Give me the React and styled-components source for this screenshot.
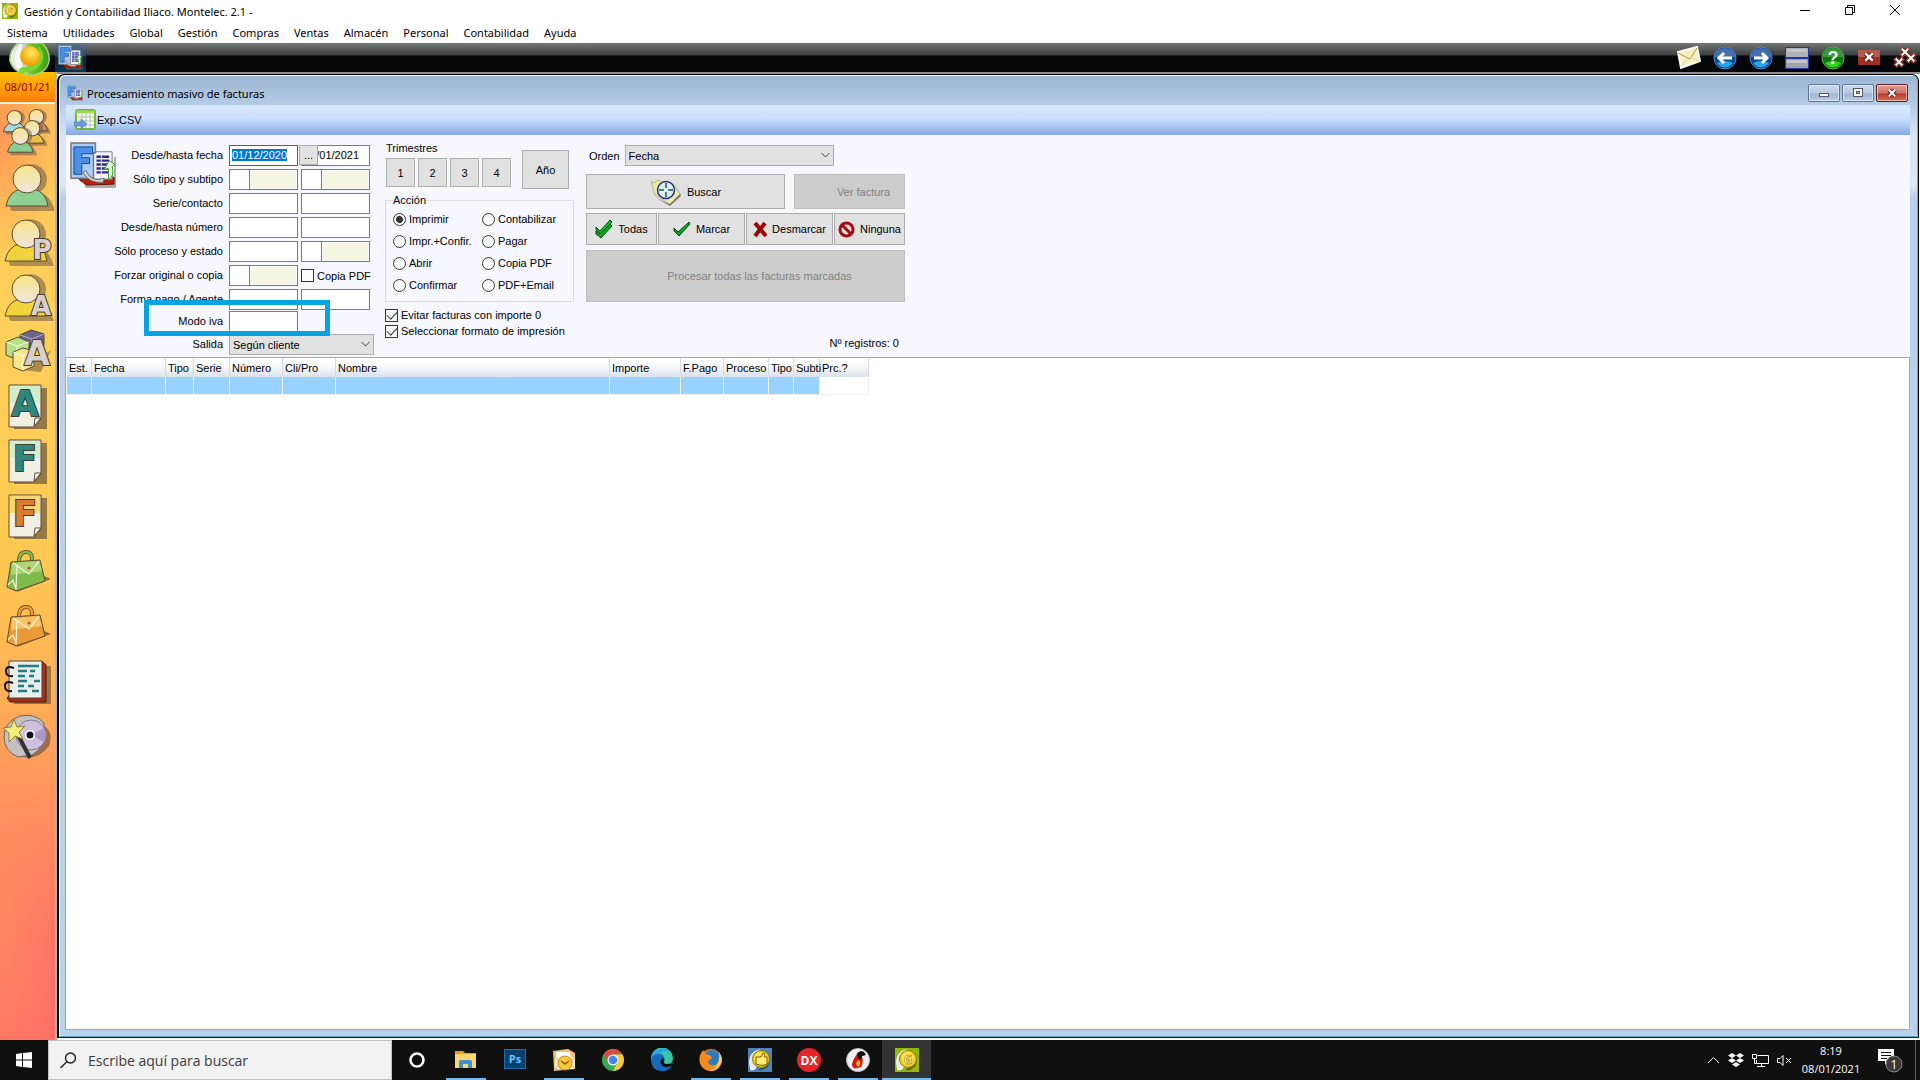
import React, { useEffect, useRef, useState } from "react"
import styled, { createGlobalStyle, css } from "styled-components"

const GlobalStyle = createGlobalStyle`
  * { box-sizing: border-box; }
  body {
    margin: 0;
    background: #fff;
    color: #000;
    font-family: "Liberation Sans", Arial, sans-serif;
    font-size: 11px;
  }
  button, input, select { font: inherit; color: inherit; margin: 0; padding: 0; }
  svg { display: block; flex: none; }
`

const uiFont = `"Noto Sans", "Open Sans", sans-serif`
const taskFont = `"Open Sans", "Noto Sans", sans-serif`

const Screen = styled.div`
  display: flex;
  flex-direction: column;
  min-height: 100vh;
`

const TitleBar = styled.header`
  display: flex;
  align-items: center;
  height: 24px;
  padding: 0 20px 2px 2px;
  font-family: ${uiFont};
  font-size: 11px;
  gap: 6px;
`

const TitleText = styled.span`
  flex: 1;
`

const PlainButton = styled.button`
  display: flex;
  align-items: center;
  justify-content: center;
  background: none;
  border: 0;
`

const SystemButtons = styled.div`
  display: flex;
  gap: 35px;
  margin-top: -2px;
`

const MenuBar = styled.nav`
  display: flex;
  align-items: center;
  gap: 15px;
  height: 19px;
  padding: 0 7px 2px;
  font-family: ${uiFont};
  font-size: 11px;
`

const MenuLink = styled.a`
  color: #000;
  text-decoration: none;
`

const ToolBar = styled.div`
  display: flex;
  align-items: center;
  height: 29px;
  padding-right: 3px;
  background: linear-gradient(#747877 0, #3b3e3e 12px, #05080c 13px, #020407 100%);
`

const LogoSlot = styled.div`
  width: 55px;
  height: 29px;
  padding-left: 8px;
  position: relative;
  z-index: 1;
`

const ActiveTool = styled(PlainButton)`
  width: 31px;
  height: 29px;
  background: linear-gradient(#5d7689 0, #1f4a68 13px, #08263c 14px, #0b3350 100%);
`

const ToolGroup = styled.div`
  display: flex;
  align-items: center;
  gap: 12px;
  margin-left: auto;
`

const Main = styled.main`
  display: flex;
  flex: 1;
`

const SideBar = styled.aside`
  display: flex;
  flex-direction: column;
  width: 55px;
  background:
    radial-gradient(60px 120px at 0 60px, rgba(255, 135, 85, 0.7), transparent),
    radial-gradient(70px 200px at 0 860px, rgba(255, 150, 90, 0.6), transparent),
    linear-gradient(#fec058 0, #ffd05a 25%, #ffc951 50%, #ffb055 64%, #ff8a62 78%, #ff6f69 90%, #ff6c68 100%);
`

const DateBox = styled.div`
  height: 32px;
  border-bottom: 2px solid #fff3dc;
  background: linear-gradient(#ffbe00, #ff9a0a 60%, #fb7a0c);
  color: #8c0a00;
  font-family: ${uiFont};
  font-size: 11px;
  line-height: 30px;
  text-align: center;
`

const SideButton = styled(PlainButton)`
  width: 55px;
  height: 55px;
  padding-right: 1px;
`

const Workspace = styled.div`
  display: flex;
  flex: 1;
  padding: 2px 1px 2px 0;
  border-left: 2px solid #b7b0a6;
  background: linear-gradient(#8d8d8d 0 2px, #fff 2px);
`

const Window = styled.section`
  display: flex;
  flex-direction: column;
  flex: 1;
  border: 1px solid #000;
  border-left-width: 2px;
  border-radius: 7px 7px 0 0;
  box-shadow: inset 1px 1px 0 #e6f3fb, inset -1px -1px 0 #43bac9;
  padding: 0 8px 7px 7px;
  background: linear-gradient(#9ab5d3 0, #b5cce5 30px, #d8e5f2 60px, #dce8f4 110px, #b9d1ea 122px);
`

const WindowTitle = styled.div`
  display: flex;
  align-items: center;
  gap: 4px;
  height: 30px;
  padding: 6px 2px 0 1px;
  font-family: ${uiFont};
  font-size: 11px;
`

const WindowText = styled.span`
  flex: 1;
`

const FrameButton = styled.button`
  display: flex;
  align-items: center;
  justify-content: center;
  width: 32px;
  height: 18px;
  margin-left: -2px;
  border: 1px solid ${(p) => (p.$danger ? "#5f2028" : "#5c7898")};
  border-radius: 2px;
  box-shadow: inset 0 0 0 1px rgba(255, 255, 255, 0.5);
  background: ${(p) =>
    p.$danger
      ? "linear-gradient(#e0a296 0, #cf7264 8px, #b93b2b 9px, #d2705a)"
      : "linear-gradient(#c9d9ea 0, #b7cbe1 8px, #9db6d1 9px, #b9cee5)"};
`

const FrameButtons = styled.div`
  display: flex;
  gap: 4px;
`

const ExportBar = styled.div`
  display: flex;
  align-items: center;
  height: 30px;
  padding-left: 8px;
  background: linear-gradient(#d9e8fd 0, #cbe0ff 45%, #b9d1f8 60%, #85a9e2 100%);
`

const ExportButton = styled(PlainButton)`
  gap: 1px;
`

const Panel = styled.form`
  display: flex;
  height: 222px;
  padding: 7px 0 0 4px;
  background: #f7f7ff;
`

const Fields = styled.div`
  position: relative;
  display: grid;
  grid-template-columns: 110px 70px 74px;
  grid-template-rows: repeat(6, 24px) 22px 23px 21px;
  column-gap: 2px;
  align-items: start;
  margin: 3px 0 0 0;
`

const FieldLabel = styled.label`
  display: flex;
  justify-content: flex-end;
  padding-right: 4px;
  line-height: 21px;
  white-space: nowrap;
`

const box = css`
  height: 21px;
  border: 1px solid #7a7a7a;
  background: #fff;
`

const TextBox = styled.input`
  ${box}
  width: 69px;
  padding: 0 2px 2px;
  outline: 0;
  border-radius: 0;
  &:focus { border-color: #0078d7; }
  &::selection { background: #0078d7; color: #fff; }
`

const SplitBox = styled.div`
  ${box}
  display: flex;
  width: 69px;
`

const CodeBox = styled.input`
  width: 20px;
  border: 0;
  border-right: 1px solid #7a7a7a;
  outline: 0;
`

const CodeText = styled.output`
  flex: 1;
  margin: 1px;
  background: #f5f5e1;
`

const DateCell = styled.div`
  position: relative;
`

const PickButton = styled.button`
  position: absolute;
  top: 0;
  left: -2px;
  width: 19px;
  height: 20px;
  border: 1px solid #adadad;
  background: #e1e1e1;
`

const SelectWrap = styled.div`
  display: grid;
  grid-column: ${(p) => (p.$wide ? "2 / 4" : "auto")};
  align-items: center;
  justify-items: end;
  width: ${(p) => p.$width}px;
  > * { grid-area: 1 / 1; }
  svg { margin-right: 3px; pointer-events: none; }
`

const Select = styled.select`
  appearance: none;
  width: 100%;
  height: 21px;
  padding: 0 3px;
  border: 1px solid #adadad;
  border-radius: 0;
  background: #e1e1e1;
`

const ChoiceLabel = styled.label`
  display: flex;
  align-items: center;
  gap: 3px;
  height: ${(p) => p.$height}px;
  white-space: nowrap;
`

const Check = styled.input`
  appearance: none;
  display: grid;
  place-items: center;
  width: 13px;
  height: 13px;
  border: 1px solid #333;
  background: #fff;
  &:checked::after {
    content: "";
    width: 9px;
    height: 5px;
    margin-top: -3px;
    border: solid #333;
    border-width: 0 0 1px 1px;
    transform: rotate(-47deg);
  }
`

const Radio = styled(Check)`
  border-radius: 50%;
  &:checked::after {
    width: 7px;
    height: 7px;
    margin: 0;
    border: 0;
    border-radius: 50%;
    background: #333;
  }
`

const Highlight = styled.div`
  position: absolute;
  left: 27px;
  top: 155px;
  width: 186px;
  height: 36px;
  border: 5px solid #06a3e3;
  pointer-events: none;
`

const Middle = styled.div`
  width: 189px;
  margin-left: 10px;
`

const Quarters = styled.div`
  display: flex;
  align-items: flex-start;
`

const QuarterGroup = styled.div`
  display: flex;
  flex-wrap: wrap;
  gap: 3px;
  width: 137px;
  height: 45px;
  padding-left: 1px;
`

const QuarterTitle = styled.div`
  width: 100%;
  line-height: 13px;
`

const Button = styled.button`
  display: flex;
  align-items: center;
  justify-content: center;
  gap: ${(p) => p.$gap || 0}px;
  width: ${(p) => p.$width}px;
  height: ${(p) => p.$height}px;
  padding-left: ${(p) => p.$indent || 0}px;
  border: 1px solid #adadad;
  background: #e1e1e1;
  white-space: nowrap;
  &:disabled {
    border-color: #bfbfbf;
    background: #ccc;
    color: #838383;
  }
`

const YearButton = styled(Button)`
  margin-top: 8px;
`

const Group = styled.fieldset`
  display: grid;
  grid-template-columns: 89px auto;
  align-content: start;
  height: 109px;
  margin: 4px 0 5px;
  padding: 0 7px;
  border: 1px solid #dcdcdc;
  legend { padding: 0; line-height: 15px; }
`

const Right = styled.div`
  display: flex;
  flex-direction: column;
  width: 319px;
  margin: 3px 0 0 12px;
`

const OrderRow = styled.div`
  display: flex;
  align-items: center;
  gap: 5px;
  padding-left: 3px;
  margin-bottom: 8px;
`

const ButtonRow = styled.div`
  display: flex;
  justify-content: space-between;
  margin-bottom: ${(p) => p.$after}px;
`

const Count = styled.div`
  margin: 35px 6px 0 0;
  text-align: right;
`

const Results = styled.div`
  flex: 1;
  margin-left: -1px;
  border: 1px solid #a5a5ad;
  background: #fff;
`

const Table = styled.table`
  table-layout: fixed;
  width: 802px;
  margin-left: 1px;
  border-collapse: separate;
  border-spacing: 0;
  th {
    height: 19px;
    padding: 0 0 0 2px;
    border-right: 1px solid #d5dae2;
    background: linear-gradient(#fff, #f5f7fa 50%, #d9e1ec);
    font-weight: normal;
    text-align: left;
    white-space: nowrap;
  }
  td {
    height: 18px;
    padding: 0;
    border: solid #f0f0f0;
    border-width: 0 1px 1px 0;
    background: #99d1ff;
  }
  td:last-child { background: #fff; }
`

const TaskBar = styled.footer`
  display: flex;
  height: 40px;
  background: #101010;
  color: #fff;
  font-family: ${taskFont};
`

const StartButton = styled(PlainButton)`
  width: 48px;
`

const SearchBox = styled.label`
  display: flex;
  align-items: center;
  gap: 11px;
  width: 344px;
  padding-left: 11px;
  border: 1px solid #c4c4c4;
  background: #f2f2f2;
`

const SearchInput = styled.input`
  flex: 1;
  border: 0;
  outline: 0;
  background: none;
  font-size: 14px;
  &::placeholder { color: #3b3b3b; opacity: 1; }
`

const TaskButton = styled(PlainButton)`
  width: 49px;
  background:
    linear-gradient(#76b9ed, #76b9ed) bottom / ${(p) => (p.$active ? 49 : p.$open ? 40 : 0)}px 2px no-repeat padding-box,
    ${(p) => (p.$active ? "#333" : "none")};
`

const Tray = styled.div`
  display: flex;
  align-items: center;
  gap: 8px;
  margin-left: auto;
  padding-right: 4px;
`

const Clock = styled.div`
  width: 62px;
  font-size: 11px;
  line-height: 18px;
  text-align: center;
`

const Notice = styled(PlainButton)`
  width: 34px;
  margin-left: 3px;
`

const DeskEdge = styled.div`
  width: 1px;
  height: 40px;
  background: #5a5a5a;
`

const Chevron = () => (
  <svg width="11" height="7" viewBox="0 0 11 7" fill="none" stroke="#444">
    <path d="M1.5 1 5.5 5 9.5 1" />
  </svg>
)

// gold and silver disc used by the program and by its taskbar entries
const CoinIcon = ({ size, bg, letter = "G" }) => (
  <svg width={size} height={size} viewBox="0 0 24 24">
    <rect width="24" height="24" fill={bg} />
    <path d="M3 22C0 12 2 3 12 2l3 3L7 21Z" fill="#e8e8e2" stroke="#fff" />
    <path d="M10 22C20 24 25 13 20 5l-4 13Z" fill="#36401c" opacity=".7" />
    <circle cx="13" cy="11" r="8.500" fill="#f0cf22" stroke="#8d7a0b" />
    <circle cx="12.500" cy="10" r="6" fill="#f8e353" />
    {letter ? (
      <text x="13" y="15.500" textAnchor="middle" fontSize="12" fontWeight="bold" fill="#fff6a0" stroke="#9a7d00" strokeWidth=".6">{letter}</text>
    ) : (
      <path d="M8 9h5l2-4c2 0 2 2 1 4h3v7c-3 2-6 1-8 1l-3-1Z" fill="#ffec72" stroke="#725c08" />
    )}
  </svg>
)

const LogoIcon = () => (
  <svg width="43" height="33" viewBox="0 0 43 33">
    <defs>
      <radialGradient id="yolk" cx=".55" cy=".35" r=".6">
        <stop offset="0" stopColor="#ffee60" />
        <stop offset="1" stopColor="#f49b00" />
      </radialGradient>
      <linearGradient id="ring">
        <stop offset="0" stopColor="#f2f2ee" />
        <stop offset=".4" stopColor="#c5cfb8" />
        <stop offset=".5" stopColor="#70c829" />
        <stop offset="1" stopColor="#3f9a17" />
      </linearGradient>
    </defs>
    <path d="M10 0h24q8 8 7 18-2 12-17 14Q7 32 2 18 1 8 10 0Z" fill="url(#ring)" stroke="#9fd675" strokeWidth="1.500" />
    <path d="M14 0Q4 8 8 24L16 30 13 16Z" fill="#fff" opacity=".8" />
    <path d="M30 2q12 14-3 25L12 31q-3-8 6-7 16-1 12-22Z" fill="#78d62c" />
    <circle cx="22" cy="13" r="10" fill="url(#yolk)" />
  </svg>
)

const InvoiceIcon = ({ size }) => (
  <svg width={size} height={size} viewBox="0 0 48 48">
    <path d="M12 36h33V15h2v32H16Z" fill="#777" opacity=".6" />
    <path d="M14 34 45 36V43l-28 1-8-6Z" fill="#b3200e" stroke="#641006" />
    <path d="M22 10h21v28H22Z" fill="#f4f4fa" stroke="#777" />
    <path d="M27 15h13M27 19h13M27 23h13M27 27h13M27 31h13" stroke="#2d2a8c" strokeWidth="2.500" />
    <path d="M32 14v20" stroke="#f4f4fa" strokeWidth="1" />
    <path d="M1 1h25v10h-2v26H1Z" fill="#a9ccf6" stroke="#777" strokeWidth="1.500" />
    <path d="M4 5h19v7H12v4h8v6h-8v11H4Z" fill="#4a8fe8" stroke="#164a94" />
    <path d="M16 29q6 13 19 8l-1 4q-14 2-21-10Z" fill="#d7d7dd" stroke="#666" />
    <path d="m35 28 5-9 6 4-3 2q3 9-4 14 1-7 0-12Z" fill="#e2f9d6" stroke="#2f9a2c" />
  </svg>
)

const MailIcon = () => (
  <svg width="24" height="24" viewBox="0 0 24 24">
    <path d="M1 6 20 1l3 14L4 22Z" fill="#f4efbd" stroke="#fffdf0" strokeWidth="2" />
    <path d="m1 7 12 6L20 2" fill="none" stroke="#a99b50" />
    <path d="M4 21l6-9M22 15l-8-4" fill="none" stroke="#ded7a0" />
  </svg>
)

const ArrowIcon = ({ back }) => (
  <svg width="24" height="24" viewBox="0 0 24 24">
    <circle cx="12" cy="12" r="11" fill="#08489a" stroke="#5b83c4" />
    <path d="M2 11a10 9 0 0 1 20 0Z" fill="#456fae" />
    <path d="M4 17q8 9 16 0-8-4-16 0Z" fill="#2aa4e8" />
    <path d={back ? "M19 12H6m5-5-5 5 5 5" : "M5 12h13m-5-5 5 5-5 5"} fill="none" stroke="#fff" strokeWidth="3" />
  </svg>
)

const TileIcon = () => (
  <svg width="24" height="24" viewBox="0 0 24 24">
    <rect x=".5" y="1.500" width="23" height="10" fill="#aeb2b8" stroke="#2336a0" />
    <rect x=".5" y="12.500" width="23" height="10" fill="#9da1a8" stroke="#2336a0" />
    <path d="M2 3h20v3H2ZM2 14h20v3H2Z" fill="#c4c6ca" />
  </svg>
)

const HelpIcon = () => (
  <svg width="24" height="24" viewBox="0 0 24 24">
    <circle cx="12" cy="12" r="11" fill="#09780c" stroke="#5ab04f" />
    <path d="M2 11a10 9 0 0 1 20 0Z" fill="#3f9440" />
    <path d="M4 17q8 9 16 0-8-4-16 0Z" fill="#38d420" />
    <text x="12" y="18" textAnchor="middle" fontSize="18" fontWeight="bold" fill="#e6f6e4">?</text>
  </svg>
)

const Cross = ({ x, y, s = 1 }) => (
  <g transform={`translate(${x} ${y}) scale(${s})`}>
    <path d="M-4-4 4 4M4-4-4 4" stroke="#542020" strokeWidth="5" />
    <path d="M-4-4 4 4M4-4-4 4" stroke="#fff" strokeWidth="2.500" />
  </g>
)

const CloseIcon = () => (
  <svg width="24" height="24" viewBox="0 0 24 24">
    <rect x="1" y="4" width="22" height="15" fill="#a03026" />
    <path d="M1 4h22v7H1Z" fill="#b4594e" />
    <Cross x={12} y={11} s={0.9} />
  </svg>
)

const CloseAllIcon = () => (
  <svg width="24" height="24" viewBox="0 0 24 24">
    <path d="m8 2 8 8M16 2 8 10M14 8l8 8M22 8l-8 8M2 12l8 8M10 12l-8 8" stroke="#b5452f" strokeWidth="5" />
    <Cross x={12} y={6} s={0.8} />
    <Cross x={18} y={12} s={0.8} />
    <Cross x={6} y={16} s={0.8} />
  </svg>
)

const CsvIcon = () => (
  <svg width="22" height="22" viewBox="0 0 22 22">
    <rect x="2" y="1" width="19" height="19" rx="2" fill="#f5faf0" stroke="#76b82e" strokeWidth="2" />
    <path d="M2 3h19" stroke="#a4d75e" strokeWidth="3" />
    <path d="M4 8h16M4 12h16M4 16h16M8 5v14M12 5v14M16 5v14" stroke="#b5c3ad" />
    <path d="M0 13h7v-3l6 5-6 5v-3H0Z" fill="#6d9ddf" stroke="#4472b9" strokeWidth=".6" />
  </svg>
)

const SearchDocIcon = () => (
  <svg width="32" height="28" viewBox="0 0 32 28">
    <path d="m6 20 13 6 11-11 1 3-11 10Z" fill="#777" />
    <path d="m1 3 3 2 4-3 4 2 12 3 6 9-10 10L5 17Z" fill="#eeecaa" stroke="#9b9860" strokeWidth=".7" />
    <circle cx="16" cy="12" r="8.500" fill="#dcefe9" stroke="#243090" strokeWidth="1.500" />
    <path d="M16 5v5m0 4v5M9 12h5m4 0h5" stroke="#53798c" strokeWidth="2" />
  </svg>
)

const TickIcon = ({ double }) => (
  <svg width="18" height="20" viewBox="0 0 18 20">
    {double && <path d="m1 8 4 4L15 1l2 2L6 15 1 11Z" fill="#18b52f" stroke="#07510d" />}
    <path d={double ? "m1 12 4 3L15 5l2 2L6 19 1 15Z" : "m1 9 4 4L16 3l1 2L6 17 1 12Z"} fill="#11a327" stroke="#06490d" />
  </svg>
)

const RedCrossIcon = () => (
  <svg width="14" height="15" viewBox="0 0 14 15">
    <path d="m2 1 11 13M12 1 2 14" stroke="#9c0606" strokeWidth="4" />
  </svg>
)

const NoneIcon = () => (
  <svg width="17" height="17" viewBox="0 0 17 17" fill="none" stroke="#a60d12" strokeWidth="3">
    <circle cx="8.500" cy="8.500" r="6.500" />
    <path d="m4 4 9 9" />
  </svg>
)

const Person = ({ x = 0, y = 0, s = 1, body }) => (
  <g transform={`translate(${x} ${y}) scale(${s})`} strokeWidth={1 / s}>
    <path d="M4 44q-2-1-2-3 3-14 14-16a15 15 0 1 1 16 0q11 4 15 19Z" fill="#6b5a48" opacity=".55" transform="translate(3 3)" />
    <path d="M1 42q3-15 15-17h13q12 3 14 17Z" fill={body} stroke="#5c4c35" />
    <circle cx="22" cy="15" r="14" fill="url(#head)" stroke="#5c4c35" />
  </g>
)

const SideLetter = ({ children, fill = "#d9cfcb", ...rest }) => (
  <text
    fontFamily="DejaVu Sans, Liberation Sans, sans-serif"
    fontWeight="bold"
    textAnchor="middle"
    fill={fill}
    stroke="#453b35"
    strokeWidth="2"
    paintOrder="stroke"
    {...rest}
  >
    {children}
  </text>
)

const Sheet = ({ letter, color, top }) => (
  <>
    <path d="M12 5h34v41H13Z" fill="#5d4b38" opacity=".65" />
    <path d="M8 2h32v34l-7 8H8Z" fill="#f1eee4" stroke="#5c4c35" />
    <path d="M9 3h30v17H9Z" fill={top} opacity=".7" />
    <path d="m33 43 1-8h6Z" fill="#fff" stroke="#5c4c35" />
    <SideLetter x="24" y="33" fontSize="35" fill={color}>{letter}</SideLetter>
  </>
)

const Bag = ({ light, dark }) => (
  <>
    <path d="M16 44 50 31l-7-3-24 8Z" fill="#5d4b38" opacity=".7" />
    <path d="M18 14q0-10 7-10t6 9" fill="none" stroke="#5c4c35" strokeWidth="4" />
    <path d="M18 14q0-10 7-10t6 9" fill="none" stroke={dark} strokeWidth="2.500" />
    <path d="m10 14 29-2 5 21-29 10-9-4Z" fill={dark} stroke="#5c4c35" />
    <path d="m11 15 27-2 3 10-31 4Z" fill={light} opacity=".8" />
    <path d="m12 15 16 11L38 13M7 37l5-5 3 9 1-24" fill="none" stroke="#f1f5dc" strokeWidth="1.200" />
    <circle cx="28" cy="20" r="1.500" fill="#d74a20" />
  </>
)

const drawings = {
  Contactos: (
    <>
      <Person x={24} y={1} s={0.52} body="#d88a58" />
      <Person x={2} y={2} s={0.52} body="#a9d9df" />
      <Person x={19} y={12} s={0.55} body="#eec045" />
      <Person x={6} y={19} s={0.6} body="#8bce94" />
    </>
  ),
  Clientes: <Person x={4} y={1} body="#8ecf92" />,
  Proveedores: (
    <>
      <Person x={3} y={1} body="#f0d43a" />
      <SideLetter x="41" y="41" fontSize="26">P</SideLetter>
    </>
  ),
  Agentes: (
    <>
      <Person x={3} y={1} body="#f0d43a" />
      <SideLetter x="40" y="42" fontSize="26">A</SideLetter>
    </>
  ),
  Almacén: (
    <>
      <path d="m20 42 30-20-10 22Z" fill="#5d4b38" opacity=".5" />
      <path d="m19 7 11-5 13 4v12l-12 5-12-5Z" fill="#6d6487" stroke="#4b4238" />
      <path d="m19 7 12 4 12-5M31 11v12" fill="none" stroke="#b7b0c8" />
      <path d="m5 14 12-5 11 5v13l-12 5-11-5Z" fill="#b9e08a" stroke="#5c4c35" />
      <path d="m5 14 11 4 12-4M16 18v14" fill="none" stroke="#fafff0" />
      <path d="m12 24 10-4 11 3v15l-11 5-10-4Z" fill="#f4e88c" stroke="#5c4c35" />
      <path d="m12 24 10 4 11-5M22 28v14" fill="none" stroke="#fffbe0" />
      <SideLetter x="36" y="37" fontSize="33">A</SideLetter>
    </>
  ),
  Albaranes: <Sheet letter="A" color="#2e8880" top="#c3eec0" />,
  "Facturas recibidas": <Sheet letter="F" color="#2e8880" top="#c3eec0" />,
  "Facturas emitidas": <Sheet letter="F" color="#dc7b2e" top="#f8cd45" />,
  "Pedidos de compra": <Bag light="#b9dd84" dark="#7fbb4a" />,
  "Pedidos de venta": <Bag light="#f8cf76" dark="#ea9a36" />,
  Diario: (
    <>
      <path d="M12 8h38v38H13Z" fill="#5d4b38" opacity=".6" />
      <path d="m41 3 4 4v37H9l-3-4Z" fill="#a52e16" stroke="#541706" />
      <path d="M8 3h33v37H8Z" fill="#e9eeec" stroke="#514438" />
      <path d="M17 8h21M17 13h9M29 13h5M17 18h7M28 18h5M17 23h9M33 23h6M17 28h6M27 28h6M17 33h9M31 33h7" stroke="#237d7d" strokeWidth="2.500" />
      <path d="M13 10q-8-3-8 3t7 5M12 25q-8-3-8 3t7 5" fill="none" stroke="#111" strokeWidth="2" />
    </>
  ),
  Asistente: (
    <>
      <path d="M14 41q20 10 34-8 5-14-5-20Z" fill="#5d4b38" opacity=".6" />
      <path d="M3 24Q3 9 19 3q15-3 24 7 2 26-12 32L17 44Q3 38 3 24Z" fill="#c5c1c0" stroke="#6a625c" />
      <circle cx="30" cy="22" r="15" fill="#cfc0df" stroke="#857891" />
      <path d="M30 22 43 15a15 15 0 0 1 0 14Z" fill="#a995c8" />
      <circle cx="29" cy="22" r="5" fill="#fff" />
      <circle cx="29" cy="22" r="3.500" fill="#111" />
      <path d="m15 18 14 27" stroke="#333" strokeWidth="4" />
      <path d="m13 6 3 8 8-1-6 6 4 7-8-3-6 6v-9L2 15l8-1Z" fill="#f6ec7a" stroke="#8e813a" />
    </>
  ),
}

const SideIcon = ({ name }) => (
  <svg width="53" height="48" viewBox="0 0 53 48">
    <defs>
      <linearGradient id="head" x2="0" y2="1">
        <stop offset="0" stopColor="#f9e489" />
        <stop offset="1" stopColor="#efe4dc" />
      </linearGradient>
    </defs>
    {drawings[name]}
  </svg>
)

const taskIcons = [
  { name: "Cortana", icon: <svg width="18" height="18" viewBox="0 0 18 18"><circle cx="9" cy="9" r="6.500" fill="none" stroke="#fff" strokeWidth="2.500" /></svg> },
  { name: "Explorador de archivos", open: true, icon: (
    <svg width="22" height="20" viewBox="0 0 22 20">
      <path d="M0 1h8l2 2h11v15H0Z" fill="#e0a11b" />
      <path d="M0 4h21v14H0Z" fill="#fbd66b" />
      <path d="M4 18v-6q0-2 2-2h9q2 0 2 2v6h-4v-4H8v4Z" fill="#3f8fd0" />
    </svg>
  ) },
  { name: "Photoshop", icon: (
    <svg width="22" height="22" viewBox="0 0 22 22">
      <rect x=".5" y=".5" width="21" height="19" fill="#07416f" stroke="#176fb1" />
      <text x="11" y="14" fontSize="11" fontWeight="bold" fill="#6cc6ff" textAnchor="middle">Ps</text>
    </svg>
  ) },
  { name: "Outlook", open: true, icon: (
    <svg width="24" height="23" viewBox="0 0 24 23">
      <path d="M1 2 16 0l7 4v16l-21 2Z" fill="#f6bd6c" />
      <path d="M4 3h14l1 6H4Z" fill="#fff" />
      <path d="M3 8h20v12H3Z" fill="#fff4d9" />
      <path d="m3 8 6 6-6 6M23 8l-5 6 5 6" fill="none" stroke="#e8a24a" />
      <circle cx="13" cy="14" r="7" fill="#f8c93d" stroke="#c98a1c" />
      <path d="m9 12 4 3 4-3" fill="none" stroke="#8e5a10" strokeWidth="1.500" />
    </svg>
  ) },
  { name: "Chrome", icon: (
    <svg width="24" height="24" viewBox="0 0 24 24">
      <circle cx="12" cy="12" r="11" fill="#34a853" />
      <path d="M2.500 6.500A11 11 0 0 1 21.500 6.500H12L7.500 15Z" fill="#dd4b3e" />
      <path d="M21.500 6.500A11 11 0 0 1 12 23L17 14 12 6.500Z" fill="#fbc93b" />
      <circle cx="12" cy="12" r="5.500" fill="#fff" />
      <circle cx="12" cy="12" r="4.300" fill="#4285f4" />
    </svg>
  ) },
  { name: "Edge", icon: (
    <svg width="24" height="24" viewBox="0 0 24 24">
      <path d="M1 10A11 11 0 0 1 23 11q0 5-6 5-3 0-3-2 2-5-4-6-6 0-9 5Z" fill="#35c8a8" />
      <path d="M1 10A11 11 0 0 1 20 4q-6-3-10 3-6 0-9 5Z" fill="#2aa7dd" />
      <path d="M1 12q1-6 8-6 5 0 5 4-5 1-3 6 3 5 11 2-4 6-11 5Q1 22 1 12Z" fill="#1769bd" />
    </svg>
  ) },
  { name: "Firefox", open: true, icon: (
    <svg width="24" height="24" viewBox="0 0 24 24">
      <circle cx="12" cy="12" r="11" fill="#ee741f" />
      <circle cx="13" cy="10" r="8" fill="#2d7cbc" />
      <path d="M1 7q2-3 3-5l3 4q5 1 6 4l-4 3q0 5 7 4 5-2 5-11 4 9-2 14-8 6-15 0-5-5-3-13Z" fill="#f58b1f" />
      <path d="M20 4q5 7 1 13-3 6-10 6 11-5 9-19Z" fill="#ffcf3c" />
    </svg>
  ) },
  { name: "Iliaco Gestión", open: true, icon: <CoinIcon size={24} bg="#4f82bf" letter="" /> },
  { name: "DX", open: true, icon: (
    <svg width="24" height="24" viewBox="0 0 24 24">
      <circle cx="12" cy="12" r="12" fill="#e2262b" />
      <text x="12" y="16.500" fontSize="12" fontWeight="bold" fill="#fff" textAnchor="middle">DX</text>
    </svg>
  ) },
  { name: "Grabador", open: true, icon: (
    <svg width="24" height="24" viewBox="0 0 24 24">
      <circle cx="12" cy="12" r="11.500" fill="#eef1f3" stroke="#b5bcc2" />
      <path d="M11 6q2-4 7-2l1 3-3 1q2 7-1 11-9 4-9-3 1-5 5-10Z" fill="#d81712" />
      <path d="M11 6q2-4 7-2l2 3-4 1-1 4q-4-1-4-6Z" fill="#111" />
      <path d="M12 19q-4-4 1-7 3 4-1 7Z" fill="#ffbd23" />
    </svg>
  ) },
  { name: "Iliaco Contabilidad", open: true, active: true, icon: <CoinIcon size={24} bg="#93b80d" /> },
]

const menus = ["Sistema", "Utilidades", "Global", "Gestión", "Compras", "Ventas", "Almacén", "Personal", "Contabilidad", "Ayuda"]

const actions = ["Imprimir", "Contabilizar", "Impr.+Confir.", "Pagar", "Abrir", "Copia PDF", "Confirmar", "PDF+Email"]

const columns = [
  ["Est.", 25], ["Fecha", 74], ["Tipo", 28], ["Serie", 36], ["Número", 53], ["Cli/Pro", 53], ["Nombre", 274],
  ["Importe", 71], ["F.Pago", 43], ["Proceso", 45], ["Tipo", 25], ["Subti", 26], ["Prc.?", 49],
]

const Split = ({ id, label }) => (
  <SplitBox>
    <CodeBox id={id} aria-label={label} />
    <CodeText />
  </SplitBox>
)

function Filters() {
  const from = useRef(null)

  useEffect(() => {
    from.current.focus()
    from.current.select()
  }, [])

  return (
    <Fields>
      <FieldLabel htmlFor="from">Desde/hasta fecha</FieldLabel>
      <TextBox id="from" ref={from} defaultValue="01/12/2020" />
      <DateCell>
        <TextBox aria-label="Hasta fecha" defaultValue="31/01/2021" />
        <PickButton type="button">...</PickButton>
      </DateCell>

      <FieldLabel htmlFor="type">Sólo tipo y subtipo</FieldLabel>
      <Split id="type" />
      <Split label="Subtipo" />

      <FieldLabel htmlFor="serie">Serie/contacto</FieldLabel>
      <TextBox id="serie" />
      <TextBox aria-label="Contacto" />

      <FieldLabel htmlFor="number">Desde/hasta número</FieldLabel>
      <TextBox id="number" />
      <TextBox aria-label="Hasta número" />

      <FieldLabel htmlFor="process">Sólo proceso y estado</FieldLabel>
      <TextBox id="process" />
      <Split label="Estado" />

      <FieldLabel htmlFor="force">Forzar original o copia</FieldLabel>
      <Split id="force" />
      <ChoiceLabel $height={21}>
        <Check type="checkbox" />
        Copia PDF
      </ChoiceLabel>

      <FieldLabel htmlFor="payment">Forma pago / Agente</FieldLabel>
      <TextBox id="payment" />
      <TextBox aria-label="Agente" />

      <FieldLabel htmlFor="vat">Modo iva</FieldLabel>
      <TextBox id="vat" />
      <span />

      <FieldLabel htmlFor="output">Salida</FieldLabel>
      <SelectWrap $width={145} $wide>
        <Select id="output">
          <option>Según cliente</option>
        </Select>
        <Chevron />
      </SelectWrap>
      <Highlight />
    </Fields>
  )
}

function Actions() {
  const [action, setAction] = useState("Imprimir")

  return (
    <Middle>
      <Quarters>
        <QuarterGroup>
          <QuarterTitle>Trimestres</QuarterTitle>
          {[1, 2, 3, 4].map((n) => (
            <Button key={n} type="button" $width={29} $height={29}>{n}</Button>
          ))}
        </QuarterGroup>
        <YearButton type="button" $width={47} $height={39}>Año</YearButton>
      </Quarters>
      <Group>
        <legend>Acción</legend>
        {actions.map((name) => (
          <ChoiceLabel key={name} $height={22}>
            <Radio type="radio" name="action" checked={action === name} onChange={() => setAction(name)} />
            {name}
          </ChoiceLabel>
        ))}
      </Group>
      <ChoiceLabel $height={16}>
        <Check type="checkbox" defaultChecked />
        Evitar facturas con importe 0
      </ChoiceLabel>
      <ChoiceLabel $height={16}>
        <Check type="checkbox" defaultChecked />
        Seleccionar formato de impresión
      </ChoiceLabel>
    </Middle>
  )
}

function Commands() {
  return (
    <Right>
      <OrderRow>
        <label htmlFor="order">Orden</label>
        <SelectWrap $width={209}>
          <Select id="order">
            <option>Fecha</option>
          </Select>
          <Chevron />
        </SelectWrap>
      </OrderRow>
      <ButtonRow $after={4}>
        <Button type="button" $width={199} $height={35} $gap={5}><SearchDocIcon />Buscar</Button>
        <Button type="button" $width={111} $height={35} $indent={28} disabled>Ver factura</Button>
      </ButtonRow>
      <ButtonRow $after={5}>
        <Button type="button" $width={71} $height={32} $gap={5}><TickIcon double />Todas</Button>
        <Button type="button" $width={87} $height={32} $gap={5}><TickIcon />Marcar</Button>
        <Button type="button" $width={87} $height={32} $gap={5}><RedCrossIcon />Desmarcar</Button>
        <Button type="button" $width={71} $height={32} $gap={5}><NoneIcon />Ninguna</Button>
      </ButtonRow>
      <Button type="button" $width={319} $height={52} $indent={28} disabled>Procesar todas las facturas marcadas</Button>
      <Count>Nº registros: 0</Count>
    </Right>
  )
}

function InvoiceWindow() {
  return (
    <Window>
      <WindowTitle>
        <InvoiceIcon size={16} />
        <WindowText>Procesamiento masivo de facturas</WindowText>
        <FrameButtons>
          <FrameButton aria-label="Minimizar">
            <svg width="12" height="10" viewBox="0 0 12 10"><rect x="1.500" y="5.500" width="9" height="3" fill="#fff" stroke="#535666" /></svg>
          </FrameButton>
          <FrameButton aria-label="Maximizar">
            <svg width="12" height="10" viewBox="0 0 12 10">
              <rect x="1.500" y=".5" width="9" height="8" fill="#fff" stroke="#535666" />
              <rect x="4.500" y="3.500" width="3" height="2" fill="#9db6d1" stroke="#535666" />
            </svg>
          </FrameButton>
          <FrameButton aria-label="Cerrar" $danger>
            <svg width="12" height="10" viewBox="0 0 12 10"><Cross x={6} y={5} s={0.8} /></svg>
          </FrameButton>
        </FrameButtons>
      </WindowTitle>
      <ExportBar>
        <ExportButton><CsvIcon />Exp.CSV</ExportButton>
      </ExportBar>
      <Panel>
        <InvoiceIcon size={47} />
        <Filters />
        <Actions />
        <Commands />
      </Panel>
      <Results>
        <Table>
          <colgroup>
            {columns.map(([name, width], i) => <col key={i} style={{ width }} />)}
          </colgroup>
          <thead>
            <tr>{columns.map(([name], i) => <th key={i}>{name}</th>)}</tr>
          </thead>
          <tbody>
            <tr>{columns.map((c, i) => <td key={i} />)}</tr>
          </tbody>
        </Table>
      </Results>
    </Window>
  )
}

function Bottom() {
  return (
    <TaskBar>
      <StartButton aria-label="Inicio">
        <svg width="16" height="16" viewBox="0 0 16 16" fill="#fff">
          <path d="m0 2 6-1v6.500H0ZM7 1l9-1v7.500H7ZM0 8.500h6V15l-6-1ZM7 8.500h9V16l-9-1Z" />
        </svg>
      </StartButton>
      <SearchBox>
        <svg width="17" height="17" viewBox="0 0 17 17" fill="none" stroke="#222" strokeWidth="1.400">
          <circle cx="10.500" cy="6" r="5" />
          <path d="M7 9.500.5 16" />
        </svg>
        <SearchInput aria-label="Buscar" placeholder="Escribe aquí para buscar" />
      </SearchBox>
      {taskIcons.map((t) => (
        <TaskButton key={t.name} aria-label={t.name} $open={t.open} $active={t.active}>{t.icon}</TaskButton>
      ))}
      <Tray>
        <svg width="13" height="8" viewBox="0 0 13 8" fill="none" stroke="#fff"><path d="m1 7 5.500-5.500L12 7" /></svg>
        <svg width="16" height="15" viewBox="0 0 16 15" fill="#fff">
          <path d="m4 0 4 2.500L4 5 0 2.500Zm8 0 4 2.500L12 5 8 2.500ZM4 5l4 2.500L4 10 0 7.500Zm8 0 4 2.500L12 10 8 7.500ZM8 9l4 2.500L8 14l-4-2.500Z" />
        </svg>
        <svg width="17" height="15" viewBox="0 0 17 15" fill="none" stroke="#fff">
          <path d="M5.500 2.500h11v8h-12V7M9.500 11v3M5 13.500h8M.5 1.500h4v4h-4ZM2.500 6v4.500h2" />
        </svg>
        <svg width="15" height="13" viewBox="0 0 15 13" fill="none" stroke="#fff">
          <path d="M.5 4.500H3l3-3v10l-3-3H.5ZM9 4l5 5M14 4 9 9" />
        </svg>
        <Clock>
          <div>8:19</div>
          <div>08/01/2021</div>
        </Clock>
        <Notice aria-label="Notificaciones">
          <svg width="26" height="26" viewBox="0 0 26 26">
            <path d="M1 2h16v12h-6l-3 4v-4H1Z" fill="#fff" />
            <path d="M4 5.500h10M4 8.500h10M4 11.500h6" stroke="#101010" />
            <circle cx="17" cy="17" r="8" fill="#3b3b3b" stroke="#888" />
            <text x="17" y="21.500" textAnchor="middle" fontSize="12" fill="#fff">1</text>
          </svg>
        </Notice>
        <DeskEdge />
      </Tray>
    </TaskBar>
  )
}

function App() {
  return (
    <Screen>
      <GlobalStyle />
      <TitleBar>
        <CoinIcon size={16} bg="#93b80d" />
        <TitleText>Gestión y Contabilidad Iliaco. Montelec. 2.1 -</TitleText>
        <SystemButtons>
          <PlainButton aria-label="Minimizar">
            <svg width="10" height="10" viewBox="0 0 10 10" stroke="#000"><path d="M0 5.500h10" /></svg>
          </PlainButton>
          <PlainButton aria-label="Restaurar">
            <svg width="10" height="10" viewBox="0 0 10 10" fill="none" stroke="#000"><path d="M.5 2.500h7v7h-7ZM2.500 2V.5h7v7H8" /></svg>
          </PlainButton>
          <PlainButton aria-label="Cerrar">
            <svg width="10" height="10" viewBox="0 0 10 10" stroke="#000"><path d="m0 0 10 10M10 0 0 10" /></svg>
          </PlainButton>
        </SystemButtons>
      </TitleBar>
      <MenuBar>
        {menus.map((m) => <MenuLink key={m} href="#">{m}</MenuLink>)}
      </MenuBar>
      <ToolBar>
        <LogoSlot><LogoIcon /></LogoSlot>
        <ActiveTool aria-label="Procesamiento masivo"><InvoiceIcon size={25} /></ActiveTool>
        <ToolGroup>
          <PlainButton aria-label="Correo"><MailIcon /></PlainButton>
          <PlainButton aria-label="Anterior"><ArrowIcon back /></PlainButton>
          <PlainButton aria-label="Siguiente"><ArrowIcon /></PlainButton>
          <PlainButton aria-label="Mosaico"><TileIcon /></PlainButton>
          <PlainButton aria-label="Ayuda"><HelpIcon /></PlainButton>
          <PlainButton aria-label="Cerrar ventana"><CloseIcon /></PlainButton>
          <PlainButton aria-label="Cerrar todas"><CloseAllIcon /></PlainButton>
        </ToolGroup>
      </ToolBar>
      <Main>
        <SideBar>
          <DateBox>08/01/21</DateBox>
          {Object.keys(drawings).map((name) => (
            <SideButton key={name} aria-label={name}><SideIcon name={name} /></SideButton>
          ))}
        </SideBar>
        <Workspace>
          <InvoiceWindow />
        </Workspace>
      </Main>
      <Bottom />
    </Screen>
  )
}

export default App
